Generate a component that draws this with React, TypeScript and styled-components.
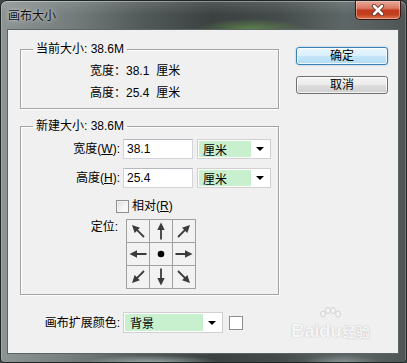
import React from 'react';
import styled, { createGlobalStyle } from 'styled-components';

const GlobalStyle = createGlobalStyle`
  html, body {
    margin: 0;
    padding: 0;
    background: #3f4646;
  }
  body {
    width: 407px;
    height: 363px;
    overflow: hidden;
    font-family: "Liberation Sans", "Noto Sans CJK SC", sans-serif;
    font-size: 12px;
    color: #000;
  }
`;

const Window = styled.div`
  position: relative;
  width: 407px;
  height: 363px;
  box-sizing: border-box;
  display: flex;
  flex-direction: column;
  padding: 0 7px 8px 6px;
  border: 1px solid #1f2525;
  border-radius: 7px 7px 4px 4px;
  overflow: hidden;
  background:
    radial-gradient(ellipse 55px 10px at 250px 28px, rgba(120, 190, 80, 0.5), rgba(120, 190, 80, 0) 100%),
    radial-gradient(ellipse 70px 8px at 150px 362px, rgba(210, 228, 228, 0.6), rgba(210, 228, 228, 0) 100%),
    radial-gradient(ellipse 40px 8px at 340px 362px, rgba(190, 205, 205, 0.45), rgba(190, 205, 205, 0) 100%),
    linear-gradient(180deg, rgba(255, 255, 255, 0.12) 0px, rgba(255, 255, 255, 0) 14px),
    linear-gradient(90deg, #8d9494 0%, #737b7b 18%, #525959 35%, #3b4141 52%, #444a4a 68%, #5e6767 85%, #4d5555 100%);
  box-shadow: inset 0 1px 0 rgba(255, 255, 255, 0.35), inset 1px 0 0 rgba(255, 255, 255, 0.2), inset -1px 0 0 rgba(255, 255, 255, 0.2);
`;

const TitleBar = styled.div`
  height: 28px;
  display: flex;
  justify-content: space-between;
  align-items: flex-start;
`;

const Title = styled.div`
  margin: 7px 0 0 1px;
  line-height: 16px;
  font-size: 12px;
  color: #111;
  text-shadow: 0 0 6px rgba(255, 255, 255, 0.7), 0 0 2px rgba(255, 255, 255, 0.5);
`;

const CloseButton = styled.div`
  width: 46px;
  height: 19px;
  margin-right: -2px;
  box-sizing: border-box;
  display: flex;
  align-items: center;
  justify-content: center;
  border: 1px solid #3a1712;
  border-top: none;
  border-radius: 0 0 5px 5px;
  background: linear-gradient(#e7a899 0%, #d97a64 40%, #c23a1f 52%, #c0401f 75%, #dc7750 100%);
  box-shadow: inset 0 0 0 1px rgba(255, 220, 210, 0.45);
`;

const Client = styled.div`
  flex: 1;
  display: flex;
  background: #f0f0f0;
  border: 1px solid #5c6464;
`;

const Main = styled.div`
  padding: 11px 0 0 12px;
  display: flex;
  flex-direction: column;
`;

const Group = styled.fieldset<{ $spaced?: boolean }>`
  width: 259px;
  box-sizing: border-box;
  margin: ${(p) => (p.$spaced ? '9px' : '0')} 0 0 0;
  padding: 0 0 0 12px;
  border: 1px solid #a3a3a3;
  box-shadow: inset 1px 1px 0 #fdfdfd, 1px 1px 0 #fdfdfd;
  min-width: 0;
`;

const Legend = styled.legend`
  padding: 0 3px;
  line-height: 16px;
  font-size: 12px;
`;

const InfoList = styled.div`
  padding: 3px 0 4px 57px;
`;

const InfoRow = styled.div`
  height: 22px;
  line-height: 22px;
  white-space: nowrap;
`;

const Unit = styled.span`
  margin-left: 7px;
`;

const Form = styled.div`
  display: flex;
  flex-direction: column;
  padding: 5px 0 5px 0;
`;

const FieldRow = styled.div<{ $top?: number }>`
  display: flex;
  align-items: center;
  margin-top: ${(p) => p.$top ?? 0}px;
`;

const FieldLabel = styled.div<{ $width: number }>`
  width: ${(p) => p.$width}px;
  text-align: right;
  white-space: nowrap;
  line-height: 16px;
`;

const TextBox = styled.div`
  width: 70px;
  height: 20px;
  box-sizing: border-box;
  margin-left: 3px;
  padding-left: 3px;
  line-height: 18px;
  background: #fff;
  border: 1px solid #d2d4d9;
  border-top-color: #b5b8bf;
`;

const Select = styled.div<{ $width: number; $height: number; $gap: number }>`
  width: ${(p) => p.$width}px;
  height: ${(p) => p.$height}px;
  margin-left: ${(p) => p.$gap}px;
  box-sizing: border-box;
  display: flex;
  padding: 1px;
  background: #fff;
  border: 1px solid #d0d0d0;
`;

const SelectValue = styled.div<{ $indent: number }>`
  flex: 1;
  padding-left: ${(p) => p.$indent}px;
  background: #c8efce;
  display: flex;
  align-items: center;
`;

const SelectArrow = styled.div`
  width: 18px;
  display: flex;
  align-items: center;
  justify-content: center;
  &::after {
    content: '';
    border-left: 4px solid transparent;
    border-right: 4px solid transparent;
    border-top: 4px solid #000;
  }
`;

const CheckRow = styled.label`
  display: flex;
  align-items: center;
  height: 16px;
  margin: 10px 0 0 83px;
  line-height: 16px;
`;

const CheckBox = styled.span`
  width: 13px;
  height: 13px;
  box-sizing: border-box;
  margin-right: 3px;
  border: 1px solid #8e8f8f;
  background: linear-gradient(135deg, #dcdcdc 0%, #f6f6f6 60%, #ffffff 100%);
  box-shadow: inset 0 0 0 1px #f4f4f4;
`;

const AnchorRow = styled.div`
  display: flex;
  align-items: flex-start;
  margin-top: 5px;
`;

const AnchorLabel = styled.div`
  width: 85px;
  margin-right: 8px;
  text-align: right;
  line-height: 16px;
`;

const AnchorGrid = styled.div`
  display: grid;
  grid-template-columns: repeat(3, 22px);
  grid-template-rows: repeat(3, 22px);
  gap: 1px;
  border: 1px solid #a0a0a0;
  background: #a0a0a0;
`;

const AnchorCell = styled.div`
  background: #f2f2f2;
  display: flex;
  align-items: center;
  justify-content: center;
`;

const ExtendRow = styled.div`
  display: flex;
  align-items: center;
  margin-top: 17px;
`;

const Swatch = styled.div`
  width: 14px;
  height: 14px;
  box-sizing: border-box;
  margin-left: 6px;
  background: #fff;
  border: 1px solid #8c8c8c;
`;

const Actions = styled.div`
  display: flex;
  flex-direction: column;
  gap: 11px;
  margin: 17px 0 0 17px;
`;

const Button = styled.div<{ $primary?: boolean }>`
  width: 92px;
  height: 18px;
  box-sizing: border-box;
  display: flex;
  align-items: center;
  justify-content: center;
  border: 1px solid ${(p) => (p.$primary ? '#3c7fb1' : '#707070')};
  border-radius: 3px;
  background: ${(p) =>
    p.$primary
      ? 'linear-gradient(#eaf6fd 0%, #d9f0fc 50%, #c4e6f8 52%, #b3dcf2 100%)'
      : 'linear-gradient(#f4f4f4 0%, #ebebeb 50%, #dddddd 52%, #cfcfcf 100%)'};
  box-shadow: inset 0 0 0 1px rgba(255, 255, 255, 0.75)
    ${(p) => (p.$primary ? ', 0 0 2px rgba(60, 160, 220, 0.6)' : '')};
  font-size: 12px;
  line-height: 16px;
`;

const Watermark = styled.div`
  position: absolute;
  left: 290px;
  top: 306px;
  display: flex;
  align-items: flex-end;
  color: #f6f6f6;
  font-family: "Liberation Sans", "Noto Sans CJK SC", sans-serif;
  font-weight: bold;
  text-shadow: 0 0 1px #c2c2c2, 0 0 1px #c2c2c2;
  pointer-events: none;
`;

const MarkWord = styled.span`
  font-size: 19px;
  line-height: 22px;
  letter-spacing: -0.5px;
`;

const MarkPaw = styled.span`
  display: inline-flex;
  flex-direction: column;
  align-items: center;
`;

const MarkCn = styled.span`
  font-size: 14px;
  line-height: 20px;
  margin-left: 1px;
`;

const Arrow = ({ angle }: { angle: number }) => (
  <svg width="22" height="22" viewBox="0 0 22 22">
    <g transform={`rotate(${angle} 11 11)`}>
      <line x1="11" y1="19.5" x2="11" y2="8" stroke="#3b3b3b" strokeWidth="1.8" />
      <polygon points="11,2.5 7.3,10 14.7,10" fill="#3b3b3b" />
    </g>
  </svg>
);

const CloseIcon = () => (
  <svg width="14" height="12" viewBox="0 0 14 12">
    <path d="M3 2 L11 10 M11 2 L3 10" stroke="#5a2a20" strokeWidth="4.2" strokeLinecap="round" />
    <path d="M3 2 L11 10 M11 2 L3 10" stroke="#ffffff" strokeWidth="2.6" strokeLinecap="round" />
  </svg>
);

const PawDots = () => (
  <svg width="22" height="13" viewBox="0 0 22 13">
    <g fill="#f6f6f6" stroke="#c8c8c8" strokeWidth="0.8">
      <ellipse cx="4" cy="7" rx="2.3" ry="3" />
      <ellipse cx="9" cy="3.5" rx="2.3" ry="3" />
      <ellipse cx="14" cy="3.5" rx="2.3" ry="3" />
      <ellipse cx="19" cy="7" rx="2.3" ry="3" />
    </g>
  </svg>
);

const anchors: (number | null)[] = [-45, 0, 45, -90, null, 90, -135, 180, 135];

export default function App() {
  return (
    <>
      <GlobalStyle />
      <Window>
        <TitleBar>
          <Title>画布大小</Title>
          <CloseButton>
            <CloseIcon />
          </CloseButton>
        </TitleBar>
        <Client>
          <Main>
            <Group>
              <Legend>当前大小: 38.6M</Legend>
              <InfoList>
                <InfoRow>
                  宽度：38.1<Unit>厘米</Unit>
                </InfoRow>
                <InfoRow>
                  高度：25.4<Unit>厘米</Unit>
                </InfoRow>
              </InfoList>
            </Group>
            <Group $spaced>
              <Legend>新建大小: 38.6M</Legend>
              <Form>
                <FieldRow>
                  <FieldLabel $width={87}>
                    宽度(<u>W</u>):
                  </FieldLabel>
                  <TextBox>38.1</TextBox>
                  <Select $width={74} $height={20} $gap={4}>
                    <SelectValue $indent={4}>厘米</SelectValue>
                    <SelectArrow />
                  </Select>
                </FieldRow>
                <FieldRow $top={9}>
                  <FieldLabel $width={87}>
                    高度(<u>H</u>):
                  </FieldLabel>
                  <TextBox>25.4</TextBox>
                  <Select $width={74} $height={20} $gap={4}>
                    <SelectValue $indent={4}>厘米</SelectValue>
                    <SelectArrow />
                  </Select>
                </FieldRow>
                <CheckRow>
                  <CheckBox />
                  <span>
                    相对(<u>R</u>)
                  </span>
                </CheckRow>
                <AnchorRow>
                  <AnchorLabel>定位:</AnchorLabel>
                  <AnchorGrid>
                    {anchors.map((a, i) => (
                      <AnchorCell key={i}>
                        {a === null ? (
                          <svg width="8" height="8" viewBox="0 0 8 8">
                            <circle cx="4" cy="4" r="3.3" fill="#000" />
                          </svg>
                        ) : (
                          <Arrow angle={a} />
                        )}
                      </AnchorCell>
                    ))}
                  </AnchorGrid>
                </AnchorRow>
              </Form>
            </Group>
            <ExtendRow>
              <FieldLabel $width={100}>画布扩展颜色:</FieldLabel>
              <Select $width={100} $height={21} $gap={3}>
                <SelectValue $indent={5}>背景</SelectValue>
                <SelectArrow />
              </Select>
              <Swatch />
            </ExtendRow>
          </Main>
          <Actions>
            <Button $primary>确定</Button>
            <Button>取消</Button>
          </Actions>
        </Client>
        <Watermark>
          <MarkWord>Bai</MarkWord>
          <MarkPaw>
            <PawDots />
            <MarkWord>du</MarkWord>
          </MarkPaw>
          <MarkCn>经验</MarkCn>
        </Watermark>
      </Window>
    </>
  );
}
